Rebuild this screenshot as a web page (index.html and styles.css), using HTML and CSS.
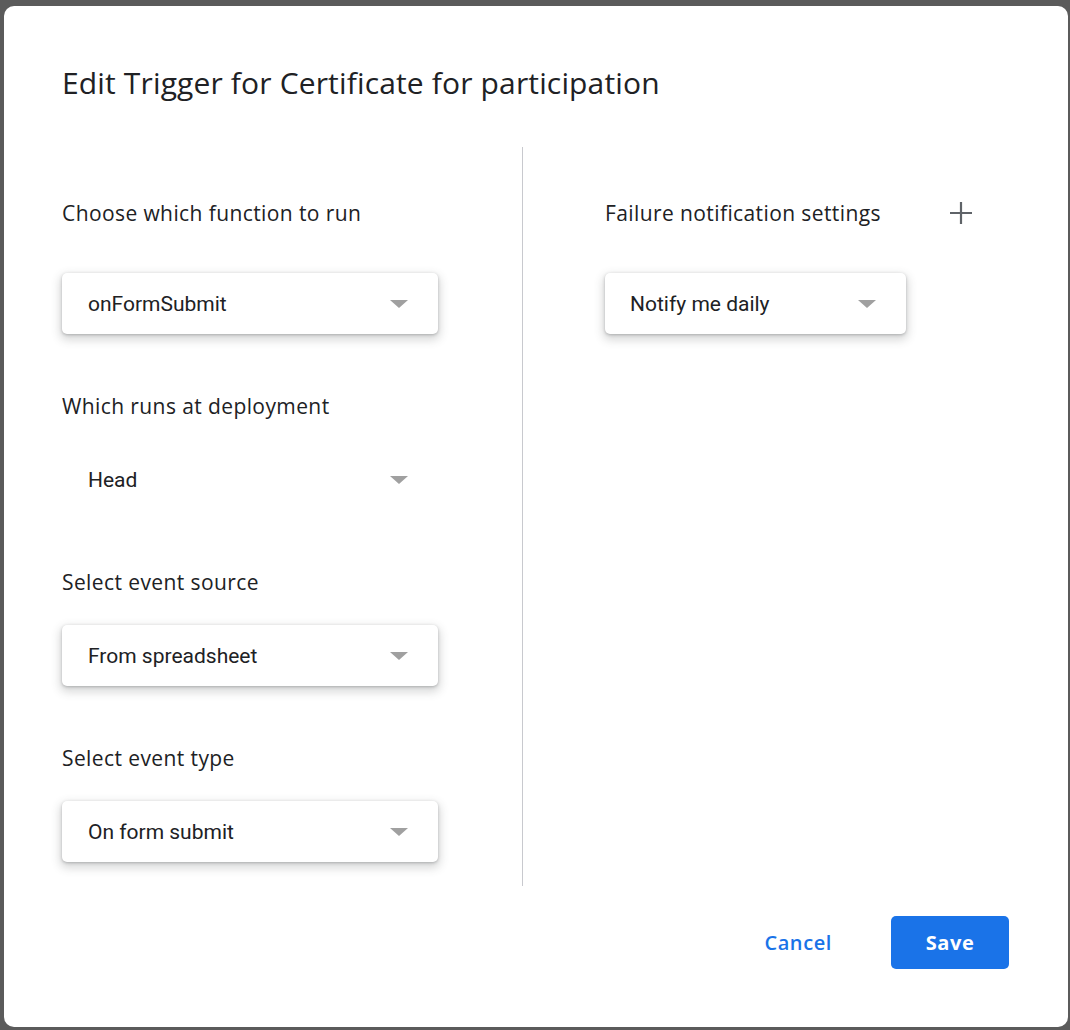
FILE: index.html
```html
<!DOCTYPE html>
<html lang="en">
<head>
<meta charset="utf-8">
<title>Edit Trigger</title>
<link rel="stylesheet" href="styles.css">
</head>
<body>
<div class="dialog">
  <h1 class="title">Edit Trigger for Certificate for participation</h1>
  <div class="columns">
    <div class="col-left">
      <div class="group first">
        <div class="label">Choose which function to run</div>
        <div class="select boxed"><span>onFormSubmit</span><i class="arrow"></i></div>
      </div>
      <div class="group">
        <div class="label">Which runs at deployment</div>
        <div class="select"><span>Head</span><i class="arrow"></i></div>
      </div>
      <div class="group">
        <div class="label">Select event source</div>
        <div class="select boxed"><span>From spreadsheet</span><i class="arrow"></i></div>
      </div>
      <div class="group">
        <div class="label">Select event type</div>
        <div class="select boxed"><span>On form submit</span><i class="arrow"></i></div>
      </div>
    </div>
    <div class="divider"></div>
    <div class="col-right">
      <div class="head-row">
        <div class="label">Failure notification settings</div>
        <button class="icon-btn" aria-label="Add">
          <svg width="22" height="22" viewBox="0 0 22 22"><path d="M11 0v22M0 11h22" stroke="#5f6368" stroke-width="2.2" fill="none"/></svg>
        </button>
      </div>
      <div class="select boxed narrow"><span>Notify me daily</span><i class="arrow"></i></div>
    </div>
  </div>
  <div class="actions">
    <button class="btn-text">Cancel</button>
    <button class="btn-primary">Save</button>
  </div>
</div>
</body>
</html>
```

FILE: styles.css
```css
html, body {
  margin: 0;
  padding: 0;
}
body {
  background: #5b5b5b;
  height: 1030px;
  padding: 6px 2px 3px 4px;
  box-sizing: border-box;
  font-family: "Open Sans", "Roboto", sans-serif;
  color: #202124;
}
.dialog {
  width: 1064px;
  height: 1021px;
  background: #fff;
  border-radius: 10px;
  box-sizing: border-box;
  padding: 0 59px 58px 58px;
  display: flex;
  flex-direction: column;
}
.title {
  margin: 59px 0 0 0;
  font-family: "Open Sans", sans-serif;
  font-weight: 400;
  font-size: 30px;
  letter-spacing: 0.15px;
  line-height: 36px;
  height: 36px;
  color: #202124;
  white-space: nowrap;
}
.columns {
  margin-top: 46px;
  height: 739px;
  display: flex;
}
.col-left {
  width: 460px;
  padding-top: 52px;
  box-sizing: border-box;
}
.divider {
  width: 1px;
  background: #c8c9ce;
}
.col-right {
  flex: 1;
  padding-left: 82px;
  padding-top: 52px;
}
.label {
  font-family: "Open Sans", sans-serif;
  font-size: 21px;
  letter-spacing: 0.4px;
  line-height: 28px;
  height: 28px;
  color: #202124;
  white-space: nowrap;
}
.group {
  margin-top: 58px;
}
.group.first {
  margin-top: 0;
}
.group .select {
  margin-top: 29px;
}
.group.first .select {
  margin-top: 46px;
}
.select {
  width: 376px;
  height: 61px;
  box-sizing: border-box;
  padding: 0 30px 0 26px;
  display: flex;
  align-items: center;
  justify-content: space-between;
  border-radius: 5px;
  font-family: "Roboto", sans-serif;
  font-size: 21px;
  color: #202124;
}
.select.boxed {
  background: #fff;
  box-shadow: 0 1px 3px rgba(60, 64, 67, 0.3), 0 4px 10px 2px rgba(60, 64, 67, 0.2);
}
.select.narrow {
  width: 301px;
  margin-top: 46px;
  padding-left: 25px;
  padding-right: 30px;
}
.arrow {
  width: 0;
  height: 0;
  border-left: 9px solid transparent;
  border-right: 9px solid transparent;
  border-top: 8px solid #a0a0a0;
  margin-top: 1px;
}
.head-row {
  width: 376px;
  display: flex;
  align-items: center;
  justify-content: space-between;
}
.icon-btn {
  width: 40px;
  height: 40px;
  margin: -6px 0;
  border: 0;
  background: transparent;
  padding: 0;
  display: flex;
  align-items: center;
  justify-content: center;
}
.actions {
  margin-top: auto;
  display: flex;
  justify-content: flex-end;
  align-items: center;
}
.btn-text {
  border: 0;
  background: transparent;
  font-family: "Open Sans", sans-serif;
  font-size: 20px;
  letter-spacing: 0.6px;
  font-weight: 600;
  color: #1a73e8;
  padding: 0 24px;
  height: 53px;
  margin-right: 35px;
}
.btn-primary {
  border: 0;
  background: #1a73e8;
  color: #fff;
  width: 118px;
  height: 53px;
  border-radius: 5px;
  font-family: "Open Sans", sans-serif;
  font-size: 20px;
  letter-spacing: 0.6px;
  font-weight: 700;
}
```
